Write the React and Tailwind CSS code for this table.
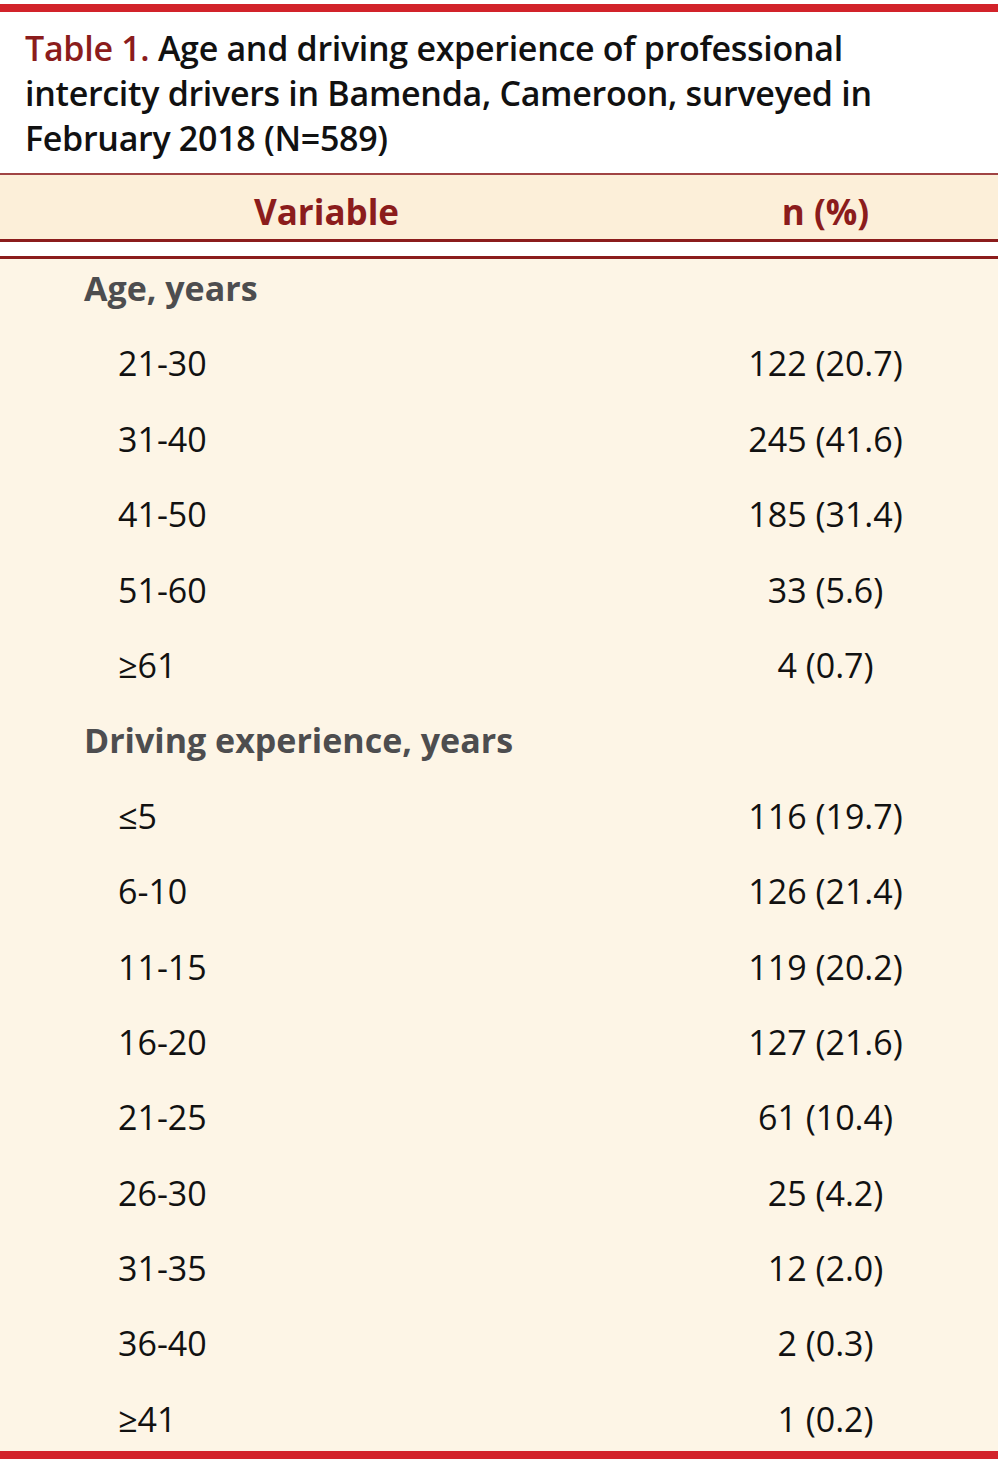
import React from 'react';

const ageRows = [
  ['21-30', '122 (20.7)'],
  ['31-40', '245 (41.6)'],
  ['41-50', '185 (31.4)'],
  ['51-60', '33 (5.6)'],
  ['≥61', '4 (0.7)'],
];

const drivingRows = [
  ['≤5', '116 (19.7)'],
  ['6-10', '126 (21.4)'],
  ['11-15', '119 (20.2)'],
  ['16-20', '127 (21.6)'],
  ['21-25', '61 (10.4)'],
  ['26-30', '25 (4.2)'],
  ['31-35', '12 (2.0)'],
  ['36-40', '2 (0.3)'],
  ['≥41', '1 (0.2)'],
];

function SectionRow({ label }) {
  return (
    <div className="h-[75.4px] pt-[12px] pl-[84px] leading-none font-bold text-[#4d4d4f]">
      {label}
    </div>
  );
}

function DataRow({ label, value }) {
  return (
    <div className="flex h-[75.4px] pt-[12px] leading-none text-[#111]">
      <div className="w-[653px] pl-[118px]">{label}</div>
      <div className="flex-1 text-center">{value}</div>
    </div>
  );
}

export default function App() {
  return (
    <div
      className="w-[998px] h-[1473px] bg-white overflow-hidden"
      style={{ fontFamily: '"Open Sans", "Noto Sans", sans-serif' }}
    >
      <div className="mt-[4px] h-[8px] bg-[#d2232a]" />

      {/* Caption */}
      <div className="h-[161px] pt-[14px] pl-[25px] pr-[20px] text-[34px] leading-[45px] font-semibold text-[#111] tracking-[-0.3px]">
        <span className="text-[#8b1c1c]">Table 1.</span>{' '}
        Age and driving experience of professional intercity drivers in Bamenda, Cameroon, surveyed in February 2018 (N=589)
      </div>

      {/* Header */}
      <div className="border-t-2 border-[#a04444] bg-[#fcefd9] flex h-[66px] pt-[19px] text-[35px] leading-none font-bold text-[#8b1c1c]">
        <div className="w-[653px] text-center">Variable</div>
        <div className="flex-1 text-center">n (%)</div>
      </div>
      <div className="h-[3px] bg-[#8b1c1c]" />
      <div className="h-[14px] bg-white" />
      <div className="h-[3px] bg-[#8b1c1c]" />

      {/* Body */}
      <div className="h-[1192px] overflow-hidden bg-[#fdf5e6] text-[34px]">
        <SectionRow label="Age, years" />
        {ageRows.map(([l, v]) => (
          <DataRow key={l} label={l} value={v} />
        ))}
        <SectionRow label="Driving experience, years" />
        {drivingRows.map(([l, v]) => (
          <DataRow key={l} label={l} value={v} />
        ))}
      </div>
      <div className="h-[8px] bg-[#d2232a]" />
    </div>
  );
}
